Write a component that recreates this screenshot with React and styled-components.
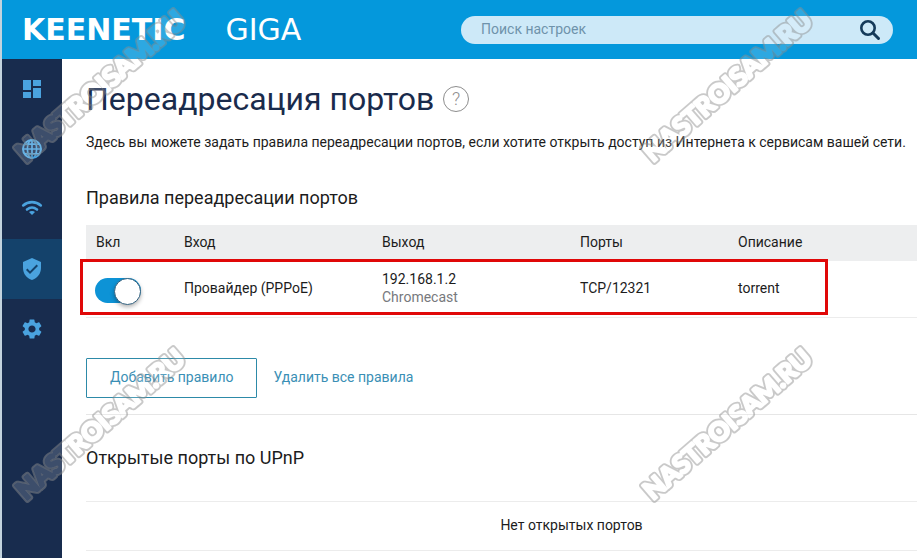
import React from "react";
import styled, { createGlobalStyle } from "styled-components";
import { MdDashboard, MdSettings, MdVerifiedUser } from "react-icons/md";

const GlobeIcon = () => (
  <svg width="24" height="24" viewBox="0 0 24 24" fill="none" stroke="currentColor">
    <circle cx="12" cy="12" r="9" strokeWidth="2" />
    <ellipse cx="12" cy="12" rx="4.6" ry="9.2" strokeWidth="1.7" />
    <path d="M12 3v18M2.8 12h18.4M4.3 7.2h15.4M4.3 16.8h15.4" strokeWidth="1.7" />
  </svg>
);

const WifiIcon = () => (
  <svg width="24" height="24" viewBox="0 0 24 24" fill="none" stroke="currentColor">
    <path d="M3.2 8.400C8.200 4 15.800 4 20.800 8.400" strokeWidth="2.600" strokeLinecap="round" />
    <path d="M7 12.500c3-2.400 7-2.400 10 0" strokeWidth="2.600" strokeLinecap="round" />
    <path
      d="M12 14c-1.300 0-2.300.4-3 1l3 3 3-3c-.7-.6-1.700-1-3-1z"
      fill="currentColor"
      stroke="none"
    />
  </svg>
);

const navItems = [
  { label: "Панель", icon: MdDashboard },
  { label: "Интернет", icon: GlobeIcon },
  { label: "Wi-Fi", icon: WifiIcon },
  { label: "Сетевые правила", icon: MdVerifiedUser, active: true },
  { label: "Управление", icon: MdSettings },
];

const rules = [
  {
    input: "Провайдер (PPPoE)",
    address: "192.168.1.2",
    device: "Chromecast",
    ports: "TCP/12321",
    description: "torrent",
  },
];

const stamps = [
  { id: "stamp-1", x: 8, y: 9 },
  { id: "stamp-2", x: 635, y: 9 },
  { id: "stamp-3", x: 8, y: 347 },
  { id: "stamp-4", x: 635, y: 347 },
];

// hollow letters: the mask keeps only a thin ring around each glyph
const Stamp = ({ id, x, y }) => (
  <StampSvg $x={x} $y={y} viewBox="0 0 176 160">
    <defs>
      <text id={id} x="16" y="154" transform="rotate(-41 16 154)">
        NASTROISAM.RU
      </text>
      <mask id={`${id}-ring`} maskUnits="userSpaceOnUse" x="-10" y="-10" width="200" height="180">
        <use href={`#${id}`} fill="#fff" stroke="#fff" strokeWidth="6" />
        <use href={`#${id}`} fill="#000" stroke="#000" strokeWidth="2.4" />
      </mask>
    </defs>
    <use href={`#${id}`} fill="#fff" stroke="#fff" strokeWidth="3" opacity="0.16" />
    <rect x="-10" y="-10" width="200" height="180" fill="#909090" opacity="0.48" mask={`url(#${id}-ring)`} />
  </StampSvg>
);

const App = () => {
  return (
    <Page>
      <GlobalStyle />
      <Header>
        <Logo>
          <Brand>KEENETIC</Brand>
          <Model>GIGA</Model>
        </Logo>
        <Search role="search">
          <SearchInput
            type="text"
            placeholder="Поиск настроек"
            aria-label="Поиск настроек"
          />
          <SearchButton type="button" aria-label="Найти">
            <svg width="22" height="22" viewBox="0 0 22 22" fill="none" stroke="#143a5a">
              <circle cx="9" cy="9" r="6.7" strokeWidth="2.6" />
              <path d="M14 14l5.5 5.5" strokeWidth="3" strokeLinecap="round" />
            </svg>
          </SearchButton>
        </Search>
      </Header>

      <Body>
        <Sidebar>
          {navItems.map(({ label, icon: Icon, active }) => (
            <NavLink key={label} href="#" aria-label={label} $active={active}>
              <Icon size={24} />
            </NavLink>
          ))}
        </Sidebar>

        <Content>
          <TitleRow>
            <Title>Переадресация портов</Title>
            <HelpButton type="button" aria-label="Справка">
              ?
            </HelpButton>
          </TitleRow>
          <Intro>
            Здесь вы можете задать правила переадресации портов, если хотите
            открыть доступ из Интернета к сервисам вашей сети.
          </Intro>

          <SectionTitle>Правила переадресации портов</SectionTitle>
          <TableArea>
            <Table>
              <colgroup>
                <Col $w="88px" />
                <Col $w="198px" />
                <Col $w="198px" />
                <Col $w="158px" />
                <Col />
              </colgroup>
              <thead>
                <tr>
                  <HeadCell>Вкл</HeadCell>
                  <HeadCell>Вход</HeadCell>
                  <HeadCell>Выход</HeadCell>
                  <HeadCell>Порты</HeadCell>
                  <HeadCell>Описание</HeadCell>
                </tr>
              </thead>
              <tbody>
                {rules.map((rule) => (
                  <tr key={rule.address}>
                    <ToggleCell>
                      <Toggle
                        type="checkbox"
                        role="switch"
                        defaultChecked
                        aria-label={rule.description}
                      />
                    </ToggleCell>
                    <Cell>{rule.input}</Cell>
                    <Cell>
                      {rule.address}
                      <Device>{rule.device}</Device>
                    </Cell>
                    <Cell>{rule.ports}</Cell>
                    <Cell>{rule.description}</Cell>
                  </tr>
                ))}
              </tbody>
            </Table>
            <Highlight />
          </TableArea>

          <Actions>
            <AddButton type="button">Добавить правило</AddButton>
            <TextButton type="button">Удалить все правила</TextButton>
          </Actions>

          <UpnpTitle>Открытые порты по UPnP</UpnpTitle>
          <Empty>Нет открытых портов</Empty>
        </Content>
      </Body>

      {stamps.map((stamp) => (
        <Stamp key={stamp.id} {...stamp} />
      ))}
    </Page>
  );
};

const GlobalStyle = createGlobalStyle`
  * {
    box-sizing: border-box;
  }
  body {
    margin: 0;
    background: #fff;
    color: #1c1c1c;
    font-family: Roboto, "Liberation Sans", sans-serif;
    font-size: 14px;
    line-height: 18px;
  }
  button, input {
    font: inherit;
  }
`;

const Page = styled.div`
  position: relative;
  display: flex;
  flex-direction: column;
  min-height: 100vh;
  overflow: hidden;
  border-left: 2px solid #c3d3de;
`;
const Header = styled.header`
  display: flex;
  align-items: center;
  justify-content: space-between;
  height: 59px;
  padding: 0 24px 0 20px;
  background: #0498dc;
`;
const Logo = styled.div`
  display: flex;
  align-items: center;
  gap: 40px;
  color: #fff;
  font-family: "DejaVu Sans", sans-serif;
  font-size: 30px;
  line-height: 32px;
`;
const Brand = styled.span`
  font-weight: 700;
`;
const Model = styled.span`
  font-weight: 400;
`;
const Search = styled.div`
  display: flex;
  align-items: center;
  flex: 0 1 432px;
  height: 28px;
  padding: 0 12px 0 20px;
  border-radius: 14px;
  background: #cde9f8;
`;
const SearchInput = styled.input`
  flex: 1;
  min-width: 0;
  padding: 0 0 2px;
  border: 0;
  outline: 0;
  background: transparent;
  color: #143a5a;

  &::placeholder {
    color: #6f93ab;
    opacity: 1;
  }
`;
const SearchButton = styled.button`
  display: flex;
  padding: 0;
  border: 0;
  background: none;
  cursor: pointer;
`;
const Body = styled.div`
  display: flex;
  flex: 1;
`;
const Sidebar = styled.nav`
  display: flex;
  flex-direction: column;
  flex: 0 0 60px;
  background: #182c4e;
`;
const NavLink = styled.a`
  display: flex;
  align-items: center;
  justify-content: center;
  height: 60px;
  color: #4aa3df;
  background: ${({ $active }) => ($active ? "#14426b" : "transparent")};
`;
const Content = styled.main`
  flex: 1;
  min-width: 0;
  padding: 20px 0 0 24px;
`;
const TitleRow = styled.div`
  display: flex;
  align-items: center;
  gap: 9px;
`;
const Title = styled.h1`
  margin: 0;
  color: #1a2b4c;
  font-size: 32px;
  font-weight: 400;
  line-height: 40px;
`;
const HelpButton = styled.button`
  display: flex;
  align-items: center;
  justify-content: center;
  width: 26px;
  height: 26px;
  padding: 0;
  border: 1px solid #8d8d8d;
  border-radius: 50%;
  background: none;
  color: #8d8d8d;
  font-size: 18px;
  font-weight: 300;
`;
const Intro = styled.p`
  margin: 14px 0 0;
  white-space: nowrap;
`;
const SectionTitle = styled.h2`
  margin: 35px 0 15px;
  font-size: 18px;
  font-weight: 400;
  line-height: 24px;
`;
const TableArea = styled.div`
  position: relative;
`;
const Table = styled.table`
  width: 100%;
  table-layout: fixed;
  border-collapse: collapse;
`;
const Col = styled.col`
  width: ${({ $w }) => $w || "auto"};
`;
const HeadCell = styled.th`
  height: 36px;
  padding: 0 10px 2px;
  background: #edeeef;
  font-weight: 400;
  text-align: left;
`;
const Cell = styled.td`
  height: 56px;
  padding: 0 10px 2px;
  border-bottom: 1px solid #ececec;
`;
const ToggleCell = styled(Cell)`
  padding: 4px 9px 0;
`;
const Device = styled.div`
  color: #77797d;
`;
const Toggle = styled.input`
  appearance: none;
  display: flex;
  justify-content: flex-end;
  width: 46px;
  height: 25px;
  margin: 0;
  border-radius: 13px;
  background: #0d93d6;
  cursor: pointer;

  &::before {
    content: "";
    width: 25px;
    height: 25px;
    border: 1px solid #33617f;
    border-radius: 50%;
    background: #fff;
    box-shadow: 0 2px 4px rgba(0, 0, 0, 0.3);
  }
`;
/* frame drawn over the rule row */
const Highlight = styled.div`
  position: absolute;
  left: -6px;
  bottom: 3px;
  width: 748px;
  height: 56px;
  border: 3px solid #e00808;
  pointer-events: none;
`;
const Actions = styled.div`
  display: flex;
  align-items: center;
  gap: 16px;
  padding: 40px 0 16px;
  border-bottom: 1px solid #e6e6e6;
`;
const AddButton = styled.button`
  height: 40px;
  padding: 0 23px 2px;
  border: 1px solid #2d8aa8;
  border-radius: 1px;
  background: none;
  color: #3a8fb5;
`;
const TextButton = styled.button`
  padding: 0 0 2px;
  border: 0;
  background: none;
  color: #3a8fb5;
`;
const UpnpTitle = styled(SectionTitle)`
  margin: 31px 0;
`;
const Empty = styled.div`
  padding: 14px 0 16px 140px;
  border-top: 1px solid #ececec;
  border-bottom: 1px solid #ececec;
  text-align: center;
`;
const StampSvg = styled.svg`
  position: absolute;
  left: ${({ $x }) => $x}px;
  top: ${({ $y }) => $y}px;
  width: 176px;
  height: 160px;
  overflow: visible;
  pointer-events: none;

  text {
    font-family: Lato, sans-serif;
    font-size: 26px;
    font-weight: 900;
    stroke-linejoin: round;
  }
`;

export default App;
